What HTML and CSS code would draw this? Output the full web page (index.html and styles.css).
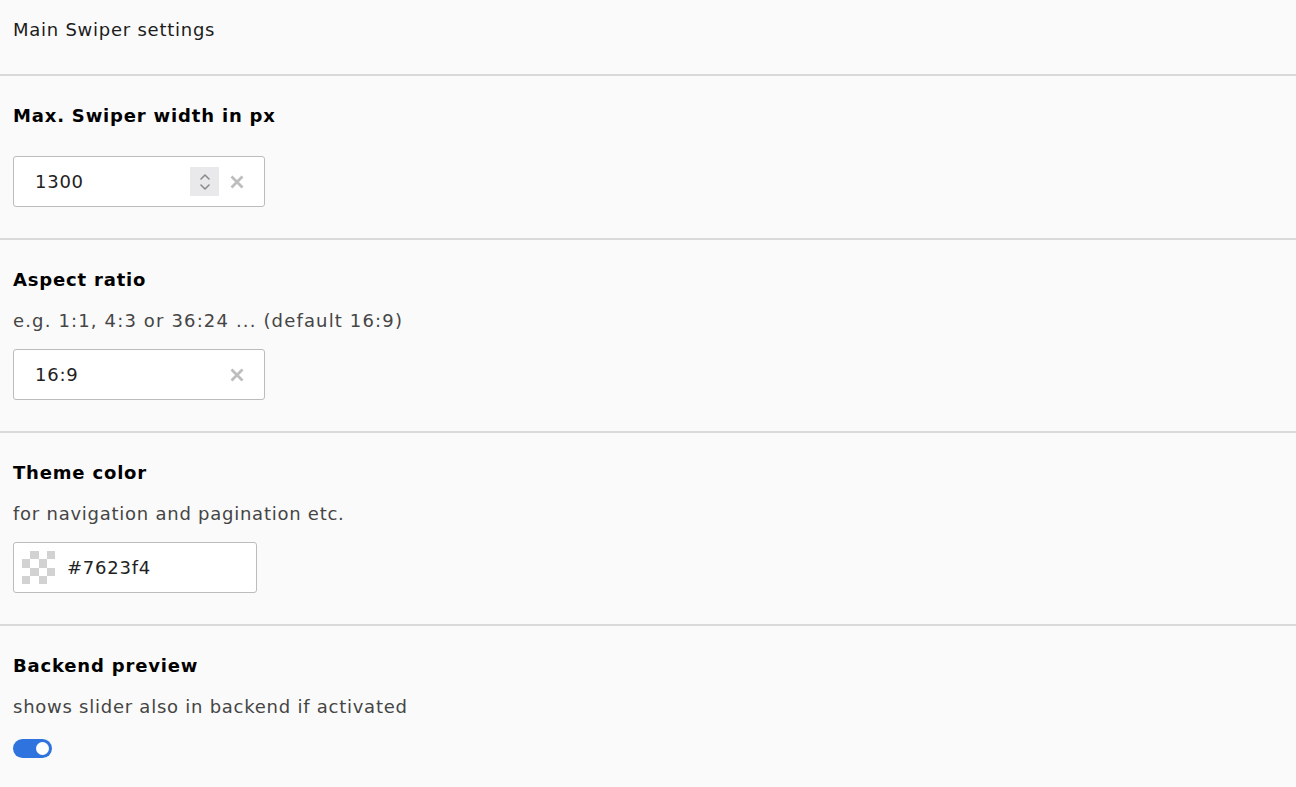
FILE: index.html
```html
<!DOCTYPE html>
<html lang="en">
<head>
<meta charset="utf-8">
<title>Main Swiper settings</title>
<link rel="stylesheet" href="styles.css">
</head>
<body>
<div class="page">
  <header class="top">Main Swiper settings</header>

  <section class="field">
    <h2 class="label">Max. Swiper width in px</h2>
    <div class="input input-wide gap-big">
      <span class="value">1300</span>
      <span class="spin">
        <svg width="14" height="22" viewBox="0 0 14 22" aria-hidden="true"><path d="M3 8 L7 4 L11 8 M3 14 L7 18 L11 14" fill="none" stroke="#8a8a8a" stroke-width="1.6" stroke-linecap="round" stroke-linejoin="round"/></svg>
      </span>
      <span class="clear"><svg width="14" height="14" viewBox="0 0 14 14" aria-hidden="true"><path d="M1.5 1.5 L12.5 12.5 M12.5 1.5 L1.5 12.5" stroke="#bdbdbd" stroke-width="2.8" stroke-linecap="butt"/></svg></span>
    </div>
  </section>

  <section class="field">
    <h2 class="label">Aspect ratio</h2>
    <p class="desc desc-numeric">e.g. 1:1, 4:3 or 36:24 ... (default 16:9)</p>
    <div class="input input-wide gap-small">
      <span class="value">16:9</span>
      <span class="clear"><svg width="14" height="14" viewBox="0 0 14 14" aria-hidden="true"><path d="M1.5 1.5 L12.5 12.5 M12.5 1.5 L1.5 12.5" stroke="#bdbdbd" stroke-width="2.8" stroke-linecap="butt"/></svg></span>
    </div>
  </section>

  <section class="field">
    <h2 class="label">Theme color</h2>
    <p class="desc">for navigation and pagination etc.</p>
    <div class="input input-color gap-small">
      <svg class="checker" width="33" height="33" viewBox="0 0 4 4" shape-rendering="crispEdges" aria-hidden="true">
        <rect width="4" height="4" fill="#ffffff"/>
        <rect x="1" y="0" width="1" height="1" fill="#d2d2d2"/>
        <rect x="3" y="0" width="1" height="1" fill="#d2d2d2"/>
        <rect x="0" y="1" width="1" height="1" fill="#d2d2d2"/>
        <rect x="2" y="1" width="1" height="1" fill="#d2d2d2"/>
        <rect x="1" y="2" width="1" height="1" fill="#d2d2d2"/>
        <rect x="3" y="2" width="1" height="1" fill="#d2d2d2"/>
        <rect x="0" y="3" width="1" height="1" fill="#d2d2d2"/>
        <rect x="2" y="3" width="1" height="1" fill="#d2d2d2"/>
      </svg>
      <span class="value">#7623f4</span>
    </div>
  </section>

  <section class="field field-last">
    <h2 class="label">Backend preview</h2>
    <p class="desc">shows slider also in backend if activated</p>
    <div class="toggle"><span class="knob"></span></div>
  </section>
</div>
</body>
</html>
```

FILE: styles.css
```css
* { box-sizing: border-box; }
html, body { margin: 0; padding: 0; }
body {
  background: #fafafa;
  font-family: "DejaVu Sans", Verdana, sans-serif;
  font-size: 18px;
  line-height: 27px;
  letter-spacing: 0.75px;
  color: #1a1a1a;
  width: 1296px;
  height: 787px;
  overflow: hidden;
}
.page { display: flex; flex-direction: column; }
.top {
  padding: 16px 13px 31px;
  color: #1c1c1c;
}
.field {
  border-top: 2px solid #d9d9d9;
  padding: 26px 13px 31px;
  display: flex;
  flex-direction: column;
  align-items: flex-start;
}
.field-last { padding-bottom: 40px; }
.label {
  margin: 0;
  font-size: 18px;
  line-height: 27px;
  font-weight: bold;
  letter-spacing: 0.82px;
  color: #000;
}
.desc {
  margin: 14px 0 0;
  color: #454545;
}
.desc-numeric { letter-spacing: 1.15px; }
.gap-big { margin-top: 27px; }
.gap-small { margin-top: 15px; }
.input {
  height: 51px;
  background: #fff;
  border: 1px solid #bcbcbc;
  border-radius: 3px;
  display: flex;
  align-items: center;
  color: #222;
}
.input-wide { width: 252px; padding-left: 21px; padding-right: 9px; }
.input-color { width: 244px; padding-left: 8px; }
.value { flex: 1; }
.spin {
  width: 29px;
  height: 29px;
  background: #e9e9eb;
  display: flex;
  align-items: center;
  justify-content: center;
}
.clear {
  width: 36px;
  display: flex;
  align-items: center;
  justify-content: center;
}
.checker { display: block; margin-right: 12px; }
.toggle {
  margin-top: 19px;
  width: 39px;
  height: 19px;
  border-radius: 10px;
  background: #2f74de;
  display: flex;
  align-items: center;
  justify-content: flex-end;
  padding-right: 3px;
}
.knob {
  width: 13px;
  height: 13px;
  border-radius: 50%;
  background: #fff;
}
```
